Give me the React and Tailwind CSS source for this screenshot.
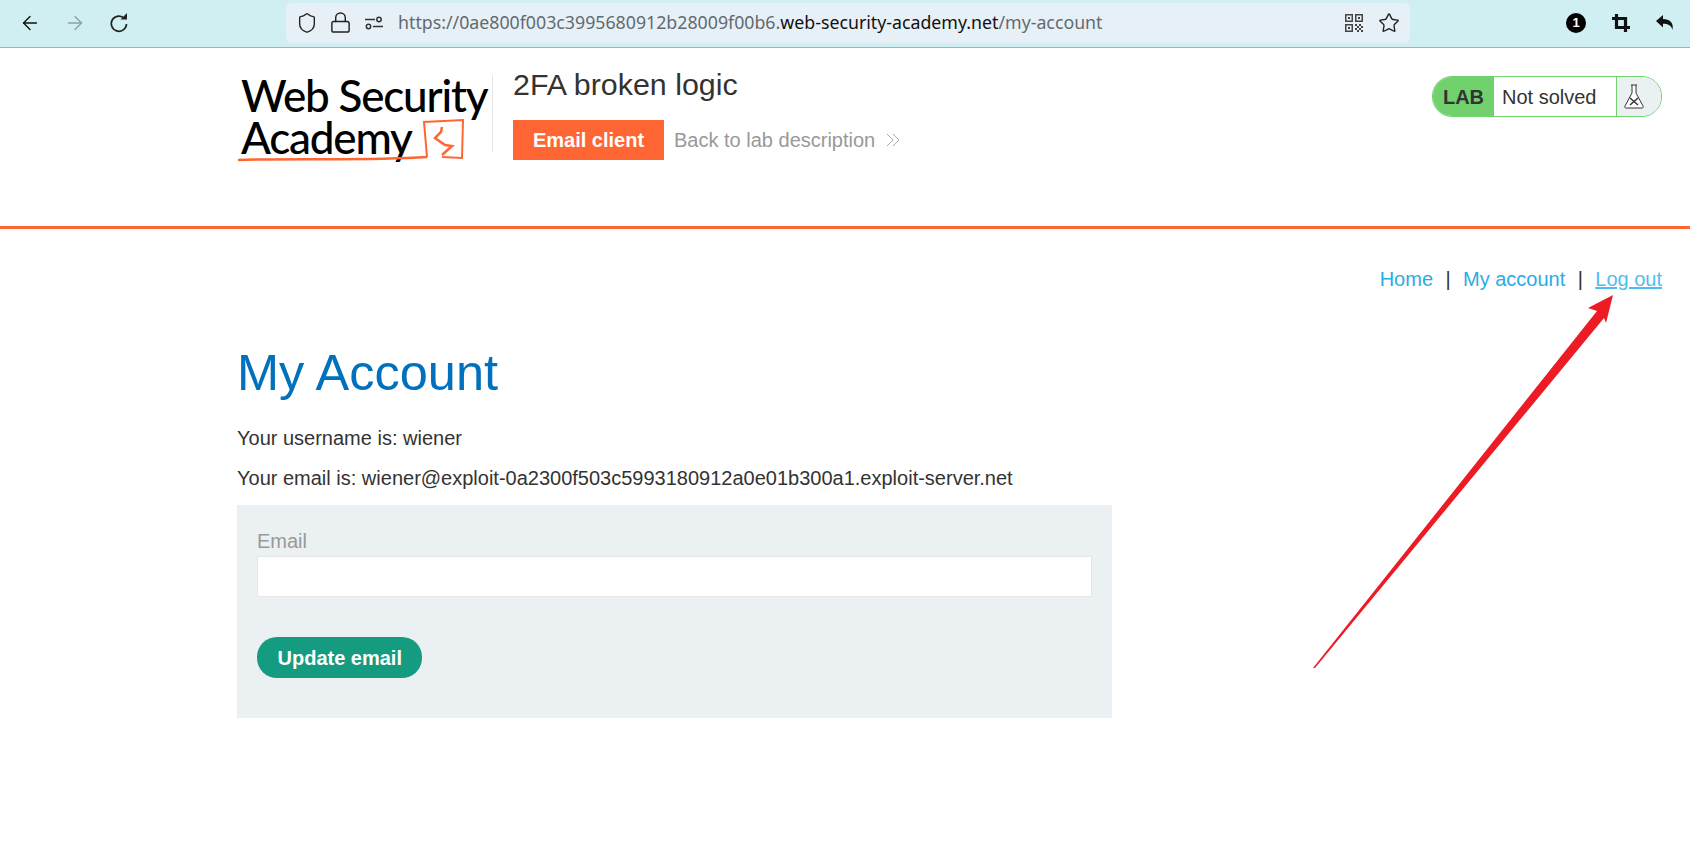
import { ArrowLeft, ArrowRight, Shield, Lock, Star } from "lucide-react";

function QrIcon() {
  return (
    <svg width="18" height="18" viewBox="0 0 18 18" fill="#444">
      <path d="M0 0h8v8H0zM1.500 1.500v5h5v-5zM3 3h2v2H3z" fillRule="evenodd" />
      <path d="M10 0h8v8h-8zM11.500 1.500v5h5v-5zM13 3h2v2h-2z" fillRule="evenodd" />
      <path d="M0 10h8v8H0zM1.500 11.500v5h5v-5zM3 13h2v2H3z" fillRule="evenodd" />
      <path d="M10 10h2v2h-2zM14 10h2v2h-2zM12 12h2v2h-2zM16 12h2v2h-2zM10 14h2v2h-2zM14 14h2v2h-2zM12 16h2v2h-2zM16 16h2v2h-2z" />
    </svg>
  );
}

function TuneIcon() {
  return (
    <svg width="18" height="14" viewBox="0 0 18 14" fill="none" stroke="#333" strokeWidth="1.5">
      <path d="M0 3.500h10" />
      <circle cx="14" cy="3.500" r="2.200" />
      <circle cx="3.500" cy="10.500" r="2.200" />
      <path d="M8 10.500h10" />
    </svg>
  );
}

function ReloadIcon() {
  return (
    <svg width="20" height="20" viewBox="0 0 20 20" fill="none" stroke="#222" strokeWidth="1.7">
      <path d="M15.500 5.500A7.600 7.600 0 1 0 17.500 11" />
      <path d="M11.500 6.500H18V0Z" fill="#222" stroke="none" />
    </svg>
  );
}

function CropIcon() {
  return (
    <svg width="18" height="18" viewBox="0 0 18 18" fill="none" stroke="#111" strokeWidth="3.2">
      <path d="M4.500 0V13.500H18" />
      <path d="M0 4.500H13.500V18" />
    </svg>
  );
}

function BackIcon() {
  return (
    <svg width="18" height="15" viewBox="0 0 18 15" fill="#111">
      <path d="M0 6L7 0V4C13.500 4 18 7.500 16.500 15C15.500 10.500 12 8.800 7 8.800V12.500Z" />
    </svg>
  );
}

function BrowserBar() {
  return (
    <div className="flex h-[48px] items-center border-b border-[#9fb3b8] bg-[#d0eff3] pb-[2px]">
      <div className="flex w-[286px] items-center gap-[23px] pl-[19px]">
        <ArrowLeft size={22} strokeWidth={1.5} color="#111" />
        <ArrowRight size={22} strokeWidth={1.5} color="#8aa2a6" />
        <ReloadIcon />
      </div>
      <div className="flex h-[40px] w-[1124px] items-center rounded-md bg-[#e8f0f7] pr-[10px]">
        <Shield size={22} strokeWidth={1.5} color="#222" className="ml-[10px]" />
        <Lock size={23} strokeWidth={1.5} color="#222" className="ml-[11px]" />
        <div className="ml-[13px]"><TuneIcon /></div>
        <div className="ml-[15px] font-['Noto_Sans',sans-serif] text-[17.75px] whitespace-nowrap text-[#5f6b70]">
          https://0ae800f003c3995680912b28009f00b6.<span className="text-[#111]">web-security-academy.net</span>/my-account
        </div>
        <div className="ml-auto flex items-center gap-[15px]">
          <QrIcon />
          <Star size={22} strokeWidth={1.5} color="#222" />
        </div>
      </div>
      <div className="ml-auto flex items-center gap-[26px] pr-[16px]">
        <div className="flex h-[20px] w-[20px] items-center justify-center rounded-full bg-black text-[13px] font-bold text-white">1</div>
        <CropIcon />
        <BackIcon />
      </div>
    </div>
  );
}

function Logo() {
  return (
    <div className="relative mt-[10px] h-[88px] w-[251px] shrink-0 font-['Lato',sans-serif] text-[44px] leading-[42px] font-medium tracking-[-1.2px] text-black">
      <div className="whitespace-nowrap">Web Security</div>
      <div className="whitespace-nowrap">Academy</div>
      <svg className="absolute top-[-2px] left-[-4px]" width="256" height="92" viewBox="0 0 256 92" fill="none" stroke="#ff6633" strokeWidth="2">
        <path d="M1 88C60 86 130 89 190 85" strokeWidth="2.5" />
        <path d="M190 85L187 50L226 48L225 86L205 85" />
        <path d="M205 55L204 60L198 66L208 73L215 74L205 83" strokeWidth="2.5" />
      </svg>
    </div>
  );
}

function LabStatus() {
  return (
    <div className="flex h-[41px] w-[230px] overflow-hidden rounded-[20px] border border-[#70d16d] bg-white">
      <div className="flex w-[61px] items-center justify-center bg-[#70d16d] text-[20px] font-bold text-[#333332]">LAB</div>
      <div className="flex flex-1 items-center pl-[8px] text-[20px] text-[#333332]">Not solved</div>
      <div className="flex w-[45px] items-center justify-center border-l border-[#70d16d] bg-[#ebf0f2] pr-[10px]">
        <svg width="20" height="25" viewBox="0 0 20 25" fill="white" stroke="#333" strokeWidth="1">
          <path d="M7 1h6M8 1v8L1 22c-.5 1 0 2 1 2h16c1 0 1.500-1 1-2L12 9V1" />
          <path d="M6 14l8 7M14 14l-8 7" strokeWidth="1.5" fill="none" />
        </svg>
      </div>
    </div>
  );
}

function Header() {
  return (
    <div className="flex h-[181px] items-start border-b-[3px] border-[#ff6633] pt-[16px] pr-[28px] pl-[241px]">
      <Logo />
      <div className="mt-[11px] h-[77px] border-l border-[#e6e6e6]" />
      <div className="ml-[20px]">
        <div className="text-[30.4px] leading-[40px] text-[#333332]">2FA broken logic</div>
        <div className="mt-[16px] flex items-center">
          <div className="flex h-[40px] w-[151px] items-center justify-center bg-[#ff6633] text-[20px] font-bold text-white">Email client</div>
          <div className="ml-[10px] text-[20px] text-[#999]">Back to lab description</div>
          <svg className="ml-[11px]" width="14" height="14" viewBox="0 0 14 14" fill="none" stroke="#aaa" strokeWidth="1">
            <path d="M1 1l6 6-6 6M7 1l6 6-6 6" />
          </svg>
        </div>
      </div>
      <div className="mt-[12px] ml-auto">
        <LabStatus />
      </div>
    </div>
  );
}

function Nav() {
  return (
    <div className="flex justify-end gap-[12.4px] pt-[38px] pr-[28px] text-[20px] leading-[24px] text-[#29ace5]">
      <span>Home</span>
      <span className="text-[#333332]">|</span>
      <span>My account</span>
      <span className="text-[#333332]">|</span>
      <span className="text-[#4fbdf0] underline">Log out</span>
    </div>
  );
}

export default function App() {
  return (
    <div className="relative h-[851px] overflow-hidden bg-white font-['Liberation_Sans',Arial,sans-serif]">
      <BrowserBar />
      <Header />
      <Nav />
      <div className="pl-[237px]">
        <h1 className="mt-[52px] text-[50.5px] leading-[60px] text-[#0071bc]">My Account</h1>
        <p className="mt-[23px] text-[20px] leading-[24px] text-[#333332]">Your username is: wiener</p>
        <p className="mt-[16px] text-[20px] leading-[24px] text-[#333332]">Your email is: wiener@exploit-0a2300f503c5993180912a0e01b300a1.exploit-server.net</p>
        <div className="mt-[15px] h-[213px] w-[875px] bg-[#ebf0f2] px-[20px] pt-[22px]">
          <label className="mb-[1px] block text-[20px] leading-[28px] text-[#999]">Email</label>
          <input className="block h-[41px] w-full border border-[#e6e6e6] bg-white" />
          <button className="mt-[40px] h-[41px] rounded-[20px] bg-[#159b7f] px-[20.5px] text-[20px] font-bold text-white">Update email</button>
        </div>
      </div>
      {/* red annotation arrow */}
      <svg className="absolute top-0 left-0" width="1690" height="851" viewBox="0 0 1690 851">
        <path d="M1313 668L1597 311L1588 308L1613 295L1606 323L1604 318L1315 668Z" fill="#ed1c24" />
      </svg>
    </div>
  );
}
